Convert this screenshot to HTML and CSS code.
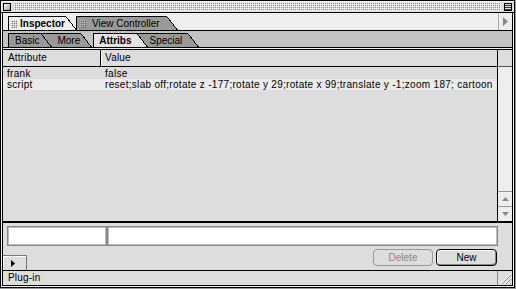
FILE: index.html
```html
<!DOCTYPE html>
<html lang="en">
<head>
    <meta charset="UTF-8">
    <title>Inspector</title>
    <link rel="stylesheet" href="styles.css">
</head>
<body>
    <div class="window">
        <div class="titlebar">
            <span class="closebox"></span>
            <span class="stripes"></span>
            <svg class="shadebox" width="8" height="8" viewBox="0 0 8 8">
                <rect x="0.5" y="0.5" width="7" height="7" fill="#ddd" stroke="#000"/>
                <path d="M1 2.5H7M1 4.5H7M1 6.5H7" stroke="#333"/>
            </svg>
        </div>

        <div class="frame">
            <div class="content">

                <!-- inspector / view controller -->
                <div class="tabrow top">
                    <div class="tabs">
                        <div class="tab sel inspector"><span class="grip"></span>Inspector</div>
                        <div class="tab viewctl"><span class="grip"></span>View Controller</div>
                    </div>
                    <div class="tab-scroll">
                        <svg width="5" height="9" viewBox="0 0 5 9"><path d="M0 0L5 4.5L0 9Z" fill="#888"/></svg>
                    </div>
                </div>

                <!-- sub tabs -->
                <div class="tabrow sub">
                    <div class="tabs">
                        <div class="tab basic">Basic</div>
                        <div class="tab more">More</div>
                        <div class="tab sel attribs">Attribs</div>
                        <div class="tab special">Special</div>
                    </div>
                </div>

                <!-- attribute list -->
                <div class="listbox">
                    <div class="list">
                        <div class="thead">
                            <div class="c1">Attribute</div>
                            <div class="c2">Value</div>
                        </div>
                        <div class="tbody">
                            <div class="row">
                                <div class="c1">frank</div>
                                <div class="c2">false</div>
                            </div>
                            <div class="row hl">
                                <div class="c1">script</div>
                                <div class="c2">reset;slab off;rotate z -177;rotate y 29;rotate x 99;translate y -1;zoom 187; cartoon</div>
                            </div>
                        </div>
                    </div>
                    <div class="vscroll">
                        <div class="corner"></div>
                        <div class="track"></div>
                        <div class="arrow">
                            <svg width="7" height="4" viewBox="0 0 7 4"><path d="M3.5 0L7 4H0Z" fill="#888"/></svg>
                        </div>
                        <div class="arrow">
                            <svg width="7" height="4" viewBox="0 0 7 4"><path d="M0 0H7L3.5 4Z" fill="#888"/></svg>
                        </div>
                    </div>
                </div>

                <!-- edit fields -->
                <div class="editor">
                    <div class="fields">
                        <div class="field key"></div>
                        <div class="field val"></div>
                    </div>
                    <div class="actions">
                        <div class="disclosure">
                            <svg width="4" height="7" viewBox="0 0 4 7"><path d="M0 0L4 3.5L0 7Z" fill="#000"/></svg>
                        </div>
                        <div class="buttons">
                            <div class="btn disabled">Delete</div>
                            <div class="btn default">New</div>
                        </div>
                    </div>
                </div>

                <div class="status">
                    <span class="status-text">Plug-in</span>
                    <span class="grow">
                        <svg width="14" height="14" viewBox="0 0 14 14">
                            <path d="M3 13L13 3M7 13L13 7M11 13L13 11" stroke="#fff"/>
                            <path d="M4 13L13 4M8 13L13 8M12 13L13 12" stroke="#888"/>
                        </svg>
                    </span>
                </div>

            </div>
        </div>
    </div>
</body>
</html>
```

FILE: styles.css
```css
* {
    box-sizing: border-box;
}

body {
    margin: 0;
    background: #999;
    font-family: "Liberation Sans", Arial, sans-serif;
    font-size: 10px;
    color: #000;
}

.window {
    width: 515px;
    height: 288px;
    border: 1px solid #000;
    background: #eee;
    display: flex;
    flex-direction: column;
}

/* title bar */
.titlebar {
    flex: none;
    height: 12px;
    border-bottom: 1px solid #000;
    background: #ddd;
    box-shadow: inset 1px 1px 0 #fff;
    display: flex;
    align-items: flex-start;
    padding: 2px 2px 0 2px;
    gap: 3px;
}

.closebox {
    width: 8px;
    height: 8px;
    border: 1px solid #000;
    background: linear-gradient(135deg, #fff, #999);
}

.stripes {
    flex: 1;
    height: 9px;
    margin-top: -1px;
    background: conic-gradient(#ddd 0 25%, #888 0 50%, #ddd 0 75%, #fff 0) 0 0 / 2px 2px;
}

.shadebox {
    display: block;
}

.frame {
    flex: 1;
    display: flex;
    padding: 0 1px 1px 1px;
    background: #eee;
    min-height: 0;
}

.content {
    flex: 1;
    min-width: 0;
    border: 1px solid #000;
    border-top: none;
    background: #ddd;
    display: flex;
    flex-direction: column;
}

/* tabs */
.tabrow {
    flex: none;
    display: flex;
    border-bottom: 1px solid #000;
}

.tabrow.top {
    height: 18px;
    background: #eee;
}

.tabrow.sub {
    height: 17px;
    background: #c3c3c3;
    box-shadow: 0 1px 0 #eee;
    margin-bottom: 1px;
}

.tabs {
    flex: 1;
    display: flex;
    align-items: flex-end;
    padding-left: 5px;
}

.tab {
    --bg: #999;
    position: relative;
    height: 14px;
    border-top: 1px solid #000;
    border-left: 1px solid #000;
    background: var(--bg);
    padding: 1px 2px 0 6px;
    line-height: 12px;
    display: flex;
    align-items: center;
    white-space: nowrap;
}

.tab::after {
    content: "";
    position: absolute;
    top: -1px;
    right: -11px;
    width: 11px;
    height: 14px;
    background: linear-gradient(to top right, var(--bg) calc(50% - 0.9px), #000 calc(50% - 0.9px) 50%, transparent 50%);
}

.tab:nth-child(1) { z-index: 4; }
.tab:nth-child(2) { z-index: 3; }
.tab:nth-child(3) { z-index: 2; }
.tab:nth-child(4) { z-index: 1; }

.tab.sel {
    z-index: 5;
    font-weight: bold;
}

.inspector {
    --bg: #eee;
    padding-left: 2px;
    padding-right: 1px;
}

.viewctl {
    margin-left: 10px;
    padding-left: 3px;
    padding-right: 7px;
}

.more {
    padding-left: 15px;
    padding-right: 1px;
}

.attribs {
    --bg: #e2e2e2;
    margin-left: 12px;
    padding-left: 5px;
    padding-right: 6px;
}

.special {
    padding-left: 11px;
    padding-right: 6px;
}

.grip {
    width: 6px;
    height: 8px;
    margin-right: 3px;
    background: conic-gradient(#ccc 0 25%, #777 0 50%, #ccc 0 75%, #fff 0) 0 0 / 2px 2px;
}

.viewctl .grip {
    margin-right: 6px;
    background: conic-gradient(#999 0 25%, #666 0 50%, #999 0 75%, #bbb 0) 0 0 / 2px 2px;
}

.tab-scroll {
    width: 14px;
    border-left: 1px solid #aaa;
    display: flex;
    align-items: center;
    justify-content: center;
}

/* list */
.listbox {
    flex: none;
    height: 173px;
    display: flex;
    border-top: 1px solid #000;
    border-bottom: 1px solid #000;
}

.list {
    flex: 1;
    min-width: 0;
    border-right: 1px solid #000;
    display: flex;
    flex-direction: column;
}

.thead {
    display: flex;
    height: 17px;
    border-bottom: 1px solid #000;
    line-height: 16px;
    letter-spacing: 0.2px;
}

.thead .c1 {
    width: 98px;
    padding-left: 5px;
    border-right: 1px solid #000;
}

.thead .c2 {
    flex: 1;
    padding-left: 4px;
    box-shadow: inset 1px 0 0 #fff;
}

.tbody {
    flex: 1;
    padding-top: 1px;
}

.row {
    display: flex;
    height: 11px;
    line-height: 11px;
    letter-spacing: 0.3px;
}

.row.hl {
    background: #ebebeb;
}

.row .c1 {
    width: 98px;
    padding-left: 4px;
}

.row .c2 {
    flex: 1;
    padding-left: 4px;
    white-space: nowrap;
    overflow: hidden;
}

.vscroll {
    width: 14px;
    background: #eee;
    display: flex;
    flex-direction: column;
}

.corner {
    height: 17px;
    background: #ddd;
    border-bottom: 1px solid #555;
}

.track {
    flex: 1;
}

.arrow {
    height: 15px;
    border-top: 1px solid #999;
    display: flex;
    align-items: center;
    justify-content: center;
}

/* editor */
.editor {
    flex: none;
    height: 48px;
    border-top: 1px solid #000;
    display: flex;
    flex-direction: column;
}

.fields {
    display: flex;
    margin: 3px 14px 0 4px;
}

.field {
    height: 20px;
    background: #fff;
    border: 1px solid #888;
    box-shadow: inset 1px 1px 0 #bbb, inset -1px -1px 0 #bbb;
}

.field.key {
    width: 100px;
}

.field.val {
    flex: 1;
}

.actions {
    flex: 1;
    display: flex;
}

.disclosure {
    align-self: flex-end;
    width: 24px;
    height: 15px;
    border-top: 1px solid #777;
    border-right: 1px solid #777;
    box-shadow: inset 1px 1px 0 #fff;
    display: flex;
    align-items: center;
    justify-content: center;
    padding-right: 3px;
}

.buttons {
    display: flex;
    gap: 3px;
    margin: 3px 15px 0 auto;
}

.btn {
    height: 17px;
    border-radius: 4px;
    text-align: center;
    line-height: 15px;
    background: #ddd;
}

.btn.disabled {
    width: 60px;
    border: 1px solid #999;
    color: #888;
}

.btn.default {
    width: 61px;
    border: 1px solid #000;
    box-shadow: inset 1px 1px 0 #fff, inset -1px -1px 0 #888;
}

/* status */
.status {
    flex: none;
    height: 15px;
    border-top: 1px solid #000;
    display: flex;
}

.status-text {
    flex: 1;
    padding-left: 5px;
    line-height: 14px;
    letter-spacing: 0.2px;
}

.grow {
    width: 15px;
    border-left: 1px solid #888;
}

.grow svg {
    display: block;
}
```
